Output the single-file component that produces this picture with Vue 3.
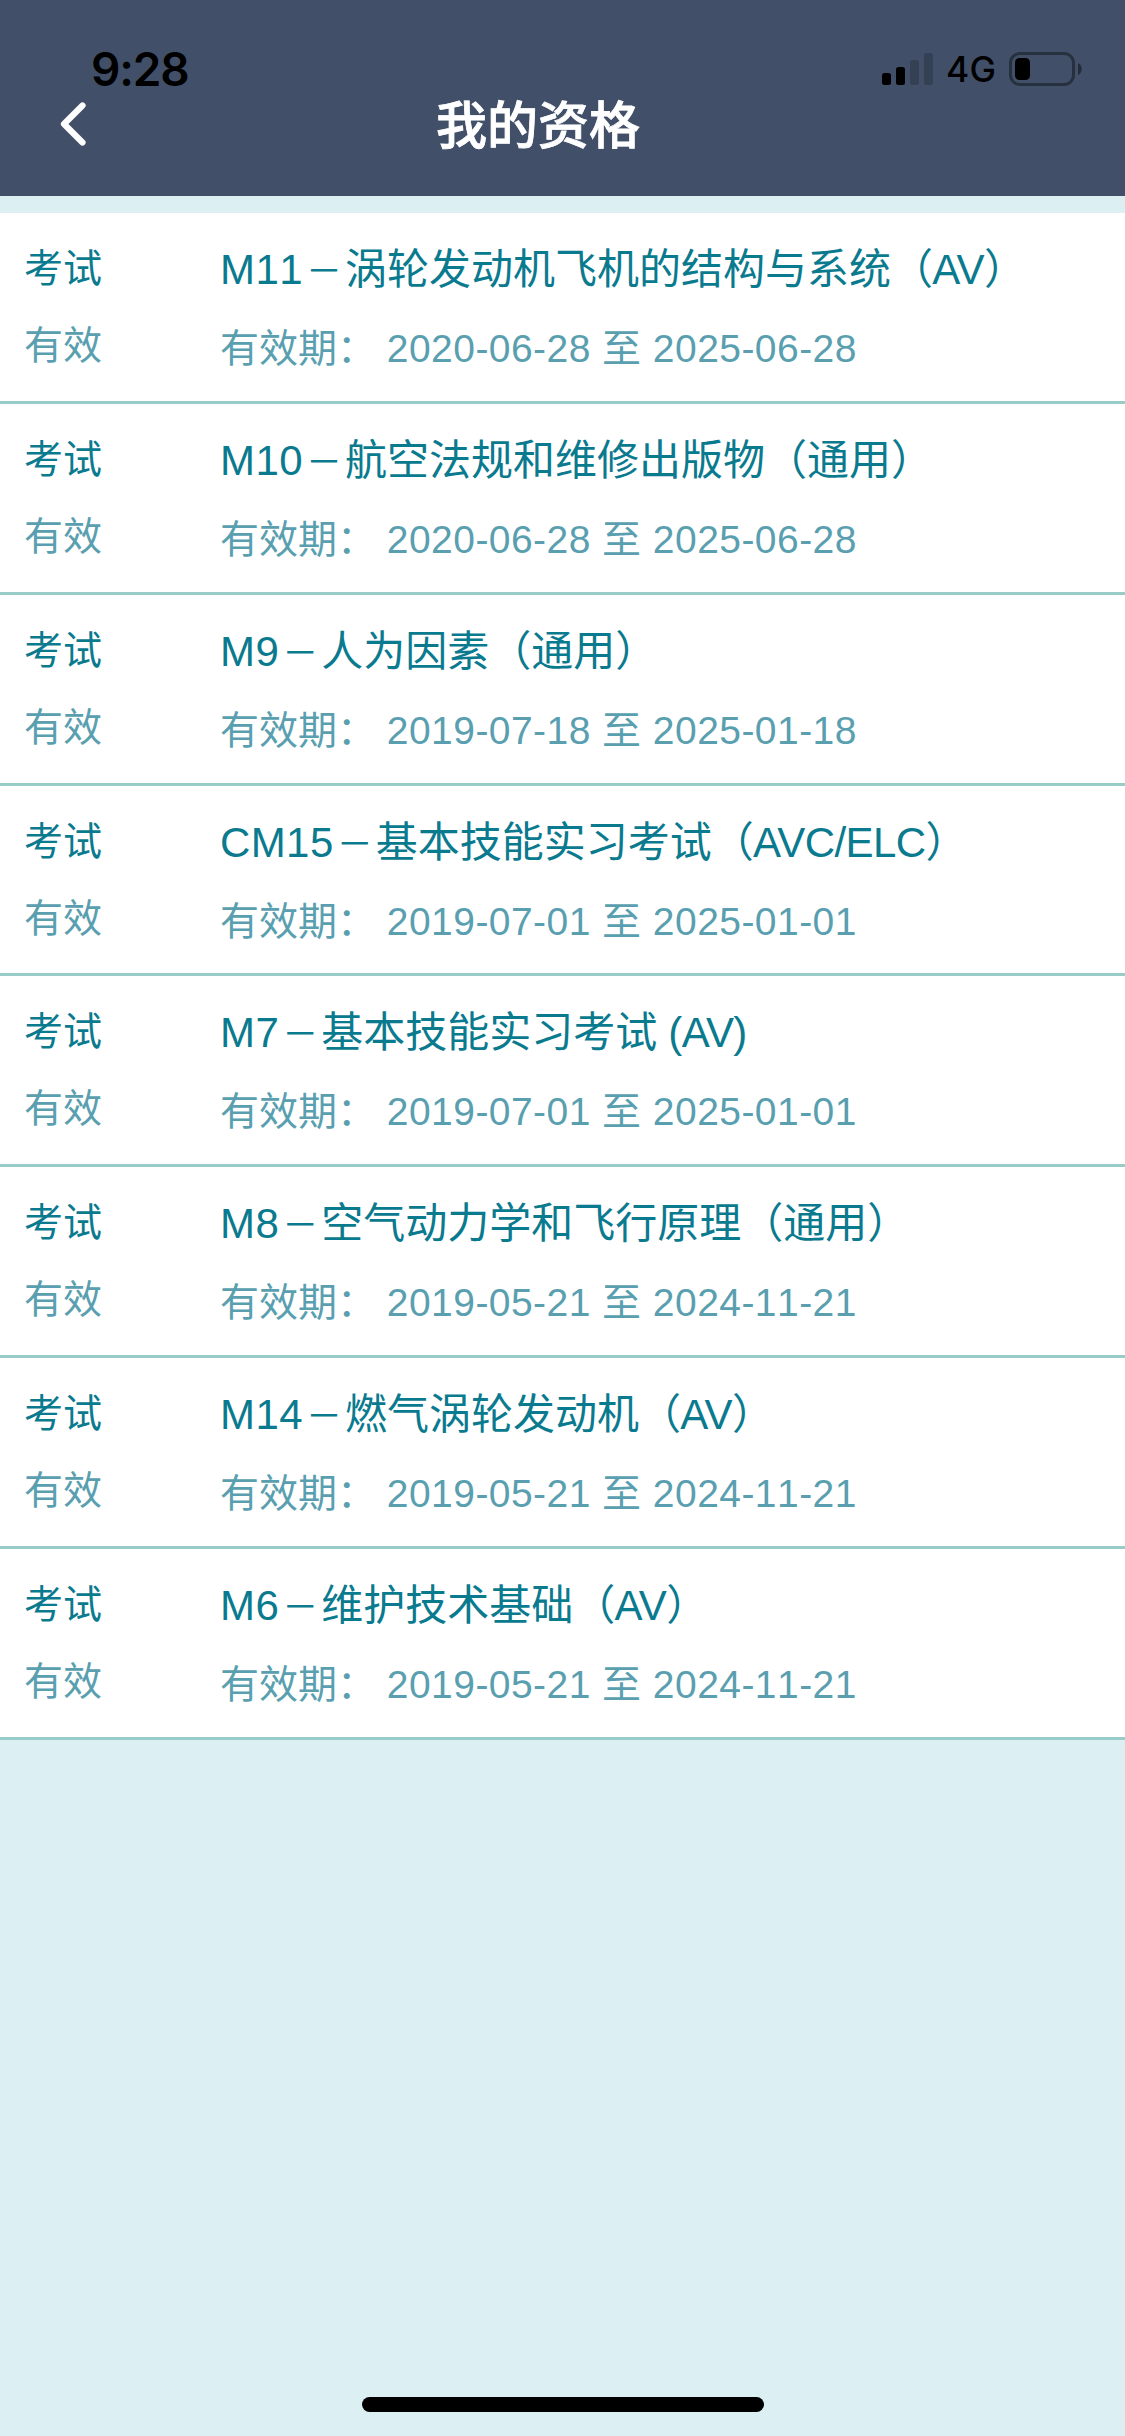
<script setup>
import { ref } from 'vue'

const time = ref('9:28')
const network = ref('4G')

const list = ref([
  { code: 'M11', name: '涡轮发动机飞机的结构与系统', scope: '（AV）', start: '2020-06-28', end: '2025-06-28' },
  { code: 'M10', name: '航空法规和维修出版物', scope: '（通用）', start: '2020-06-28', end: '2025-06-28' },
  { code: 'M9', name: '人为因素', scope: '（通用）', start: '2019-07-18', end: '2025-01-18' },
  { code: 'CM15', name: '基本技能实习考试', scope: '（AVC/ELC）', start: '2019-07-01', end: '2025-01-01' },
  { code: 'M7', name: '基本技能实习考试', scope: ' (AV)', start: '2019-07-01', end: '2025-01-01' },
  { code: 'M8', name: '空气动力学和飞行原理', scope: '（通用）', start: '2019-05-21', end: '2024-11-21' },
  { code: 'M14', name: '燃气涡轮发动机', scope: '（AV）', start: '2019-05-21', end: '2024-11-21' },
  { code: 'M6', name: '维护技术基础', scope: '（AV）', start: '2019-05-21', end: '2024-11-21' }
])

function isLatin(text) {
  return /[A-Z]/.test(text)
}
</script>

<template>
  <div class="page">
    <header class="header">
      <div class="status-bar">
        <span class="time">{{ time }}</span>
        <div class="status-right">
          <svg class="signal" width="51" height="32" viewBox="0 0 51 32">
            <rect x="0" y="20" width="9" height="12" rx="2.5" />
            <rect x="14" y="14" width="9" height="18" rx="2.5" />
            <rect x="28" y="7" width="9" height="25" rx="2.5" opacity="0.2" />
            <rect x="42" y="0" width="9" height="32" rx="2.5" opacity="0.2" />
          </svg>
          <span class="network">{{ network }}</span>
          <svg class="battery" width="74" height="34" viewBox="0 0 74 34">
            <rect x="1.5" y="1.5" width="63" height="31" rx="9.5" fill="none" stroke="#000" stroke-width="3" opacity="0.4" />
            <rect x="6" y="6" width="15" height="22" rx="4.5" />
            <path d="M69 11 C74 13 74 21 69 23 Z" opacity="0.45" />
          </svg>
        </div>
      </div>
      <div class="nav-bar">
        <svg class="back" width="30" height="44" viewBox="0 0 30 44">
          <path d="M24.5 3.5 L6 22 L24.5 40.5" fill="none" stroke="#fff" stroke-width="6.2" stroke-linecap="round" stroke-linejoin="round" />
        </svg>
        <h1 class="title">我的资格</h1>
      </div>
    </header>

    <ul class="list">
      <li v-for="item in list" :key="item.code" class="item">
        <div class="item-left">
          <div class="type">考试</div>
          <div class="state">有效</div>
        </div>
        <div class="item-right">
          <div class="name">
            <span class="code">{{ item.code }}</span
            ><span class="dash">－</span
            ><span>{{ item.name }}</span
            ><span class="scope" :class="{ latin: isLatin(item.scope) }">{{ item.scope }}</span>
          </div>
          <div class="date">
            <span>有效期：&nbsp;</span><span class="range">{{ item.start }} 至 {{ item.end }}</span>
          </div>
        </div>
      </li>
    </ul>

    <div class="home-indicator"></div>
  </div>
</template>

<style>
body {
  background-color: #dceff3;
}
</style>

<style scoped>
.page {
  display: flex;
  flex-direction: column;
  width: 1125px;
  height: 2436px;
  overflow: hidden;
  background-color: #dceff3;
  font-family: 'Liberation Sans', 'Noto Sans CJK SC', sans-serif;
}

.header {
  height: 196px;
  flex: none;
  background-color: #415068;
}

.status-bar {
  display: flex;
  justify-content: space-between;
  height: 94px;
  padding: 0 42px 0 91px;
  font-family: Inter, sans-serif;
  color: #000;
}

.time {
  padding-top: 41px;
  line-height: 56px;
  font-size: 46px;
  font-weight: 600;
  letter-spacing: -1.2px;
}

.status-right {
  display: flex;
  align-items: flex-start;
}

.signal {
  margin-top: 53px;
}

.network {
  width: 76px;
  padding-top: 48px;
  line-height: 44px;
  font-size: 35.5px;
  font-weight: 450;
  text-align: center;
}

.battery {
  margin-top: 52px;
}

.nav-bar {
  display: flex;
  align-items: flex-start;
}

.back {
  margin: 8px 0 0 58px;
}

.title {
  margin: -10px 0 0 348px;
  line-height: 76px;
  font-size: 51px;
  font-weight: 500;
  font-family: 'Noto Sans CJK SC', sans-serif;
  color: #fff;
  -webkit-text-stroke: 0.8px #fff;
}

.list {
  flex: none;
  margin: 17px 0 0;
  padding: 0;
  list-style: none;
}

.item {
  display: flex;
  box-sizing: border-box;
  height: 190.86px;
  border-bottom: 3px solid #98ccc8;
  background-color: #fff;
  white-space: nowrap;
}

.item-left {
  width: 196px;
  padding: 17px 0 0 24px;
  font-size: 39px;
  line-height: 77px;
}

.item-right {
  padding-top: 17px;
  line-height: 79px;
}

.name {
  height: 79px;
  font-size: 42px;
}

.code {
  font-kerning: none;
  letter-spacing: 0.4px;
}

.dash {
  display: inline-block;
  width: 42px;
  font-size: 36px;
  line-height: 1;
  text-align: center;
}

.scope {
  white-space: pre;
}

.latin {
  letter-spacing: -0.6px;
}

.date {
  font-size: 39px;
}

.range {
  font-kerning: none;
  letter-spacing: 0.45px;
}

.type,
.name {
  color: #0a7a8f;
}

.state,
.date {
  color: #5a9fb0;
}

.home-indicator {
  width: 402px;
  height: 15px;
  margin: auto 0 24px 362px;
  border-radius: 8px;
  background-color: #000;
}
</style>
